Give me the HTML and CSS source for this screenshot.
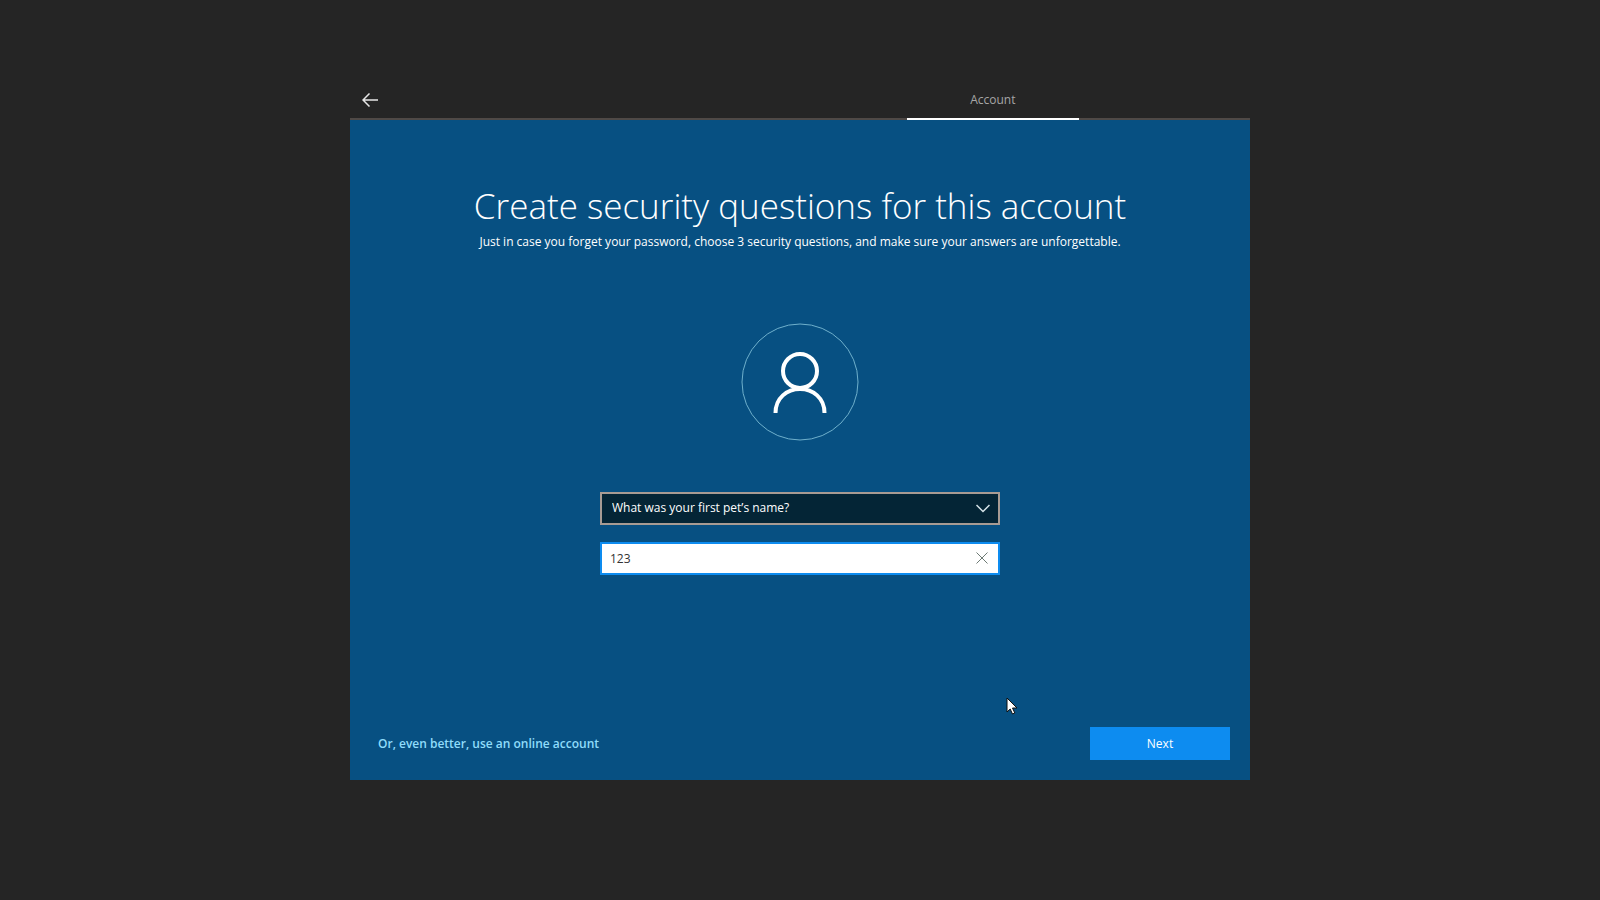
FILE: index.html
```html
<!DOCTYPE html>
<html lang="en">
<head>
    <meta charset="UTF-8">
    <meta name="viewport" content="width=device-width, initial-scale=1.0">
    <title>Account</title>
    <link rel="stylesheet" href="styles.css">
</head>
<body>

<div class="setup">
    <header class="top-bar">
        <button class="back-btn" type="button" aria-label="Back">
            <svg width="16" height="14" viewBox="0 0 16 14">
                <path d="M16 7H1M7.5 0.5L1 7l6.5 6.5" />
            </svg>
        </button>
        <div class="tab">Account</div>
    </header>

    <main class="panel">
        <h1>Create security questions for this account</h1>
        <p class="subtitle">Just in case you forget your password, choose 3 security questions, and make sure your answers are unforgettable.</p>

        <!-- User picture -->
        <svg class="avatar" width="118" height="118" viewBox="0 0 118 118">
            <circle class="ring" cx="59" cy="59" r="58" />
            <circle class="person" cx="59" cy="48" r="17" />
            <path class="person" d="M34.500 90C34.500 75 46 66 59 66S83.500 75 83.500 90" />
        </svg>

        <form class="questions" id="questions">
            <div class="field">
                <select class="question" aria-label="Security question">
                    <option>What was your first pet’s name?</option>
                </select>
                <svg class="chevron" width="14" height="9" viewBox="0 0 14 9">
                    <path d="M0.5 1L7 7.5L13.5 1" />
                </svg>
            </div>
            <div class="field">
                <input class="answer" type="text" value="123" aria-label="Your answer">
                <button class="clear-btn" type="button" aria-label="Clear">
                    <svg width="12" height="12" viewBox="0 0 12 12">
                        <path d="M0.5 0.5l11 11M11.5 0.5l-11 11" />
                    </svg>
                </button>
            </div>
        </form>

        <footer class="actions">
            <a class="online-link" href="#">Or, even better, use an online account</a>
            <button class="next-btn" type="submit" form="questions">Next</button>
        </footer>
    </main>
</div>

<!-- Mouse pointer -->
<svg class="pointer" width="12" height="19" viewBox="0 0 12 19">
    <path d="M1 1v14l3.200-3 2.300 5 2.300-1-2.300-5h4.500z" />
</svg>

</body>
</html>
```
FILE: styles.css
```css
* {
    box-sizing: border-box;
}
body {
    margin: 0;
    padding: 80px 20px;
    background-color: #252525;
    color: #fff;
    font-family: "Segoe UI", "Open Sans", "Noto Sans", sans-serif;
    font-size: 12px;
    line-height: 20px;
}
button, input, select {
    font: inherit;
}
.setup {
    max-width: 900px;
    margin: 0 auto;
}

/* Top bar with the back arrow and the tab */
.top-bar {
    display: grid;
    grid-template-columns: 13fr 4fr 4fr;
    height: 40px;
    background: linear-gradient(#4f4946, #4f4946) bottom / 100% 2px no-repeat;
}
.back-btn {
    justify-self: start;
    display: flex;
    align-items: center;
    width: 40px;
    padding: 0 12px;
    background: none;
    border: none;
}
.back-btn svg {
    fill: none;
    stroke: #e6e6e6;
    stroke-width: 1.5;
}
.tab {
    padding-top: 10px;
    text-align: center;
    color: #a6a6a6;
    border-bottom: 2px solid #fff;
}

.panel {
    display: flex;
    flex-direction: column;
    align-items: center;
    padding: 60px 20px 20px;
    background-color: #075082;
}
h1 {
    margin: 0;
    font-size: 35px;
    line-height: 52px;
    font-weight: 300;
    text-align: center;
}
.subtitle {
    margin: 0;
    text-align: center;
}
.avatar {
    margin-top: 71px;
    fill: none;
}
.ring {
    stroke: #6fb0cc;
}
.person {
    stroke: #fff;
    stroke-width: 4;
}

/* Question and answer */
.questions {
    display: grid;
    gap: 17px;
    width: 100%;
    max-width: 400px;
    margin-top: 51px;
}
.field {
    position: relative;
}
.question, .answer {
    display: block;
    width: 100%;
    height: 33px;
    border-radius: 0;
    outline: none;
}
.question {
    appearance: none;
    padding: 0 36px 1px 10px;
    background-color: #042536;
    border: 2px solid #a89b93;
    color: #fff;
}
.answer {
    padding: 0 36px 1px 8px;
    background-color: #fff;
    border: 2px solid #0d8cf0;
    color: #333;
}
.chevron {
    position: absolute;
    top: 12px;
    right: 10px;
    fill: none;
    stroke: #d5e3e8;
    stroke-width: 1.5;
    pointer-events: none;
}
.clear-btn {
    position: absolute;
    top: 2px;
    right: 2px;
    display: flex;
    align-items: center;
    justify-content: center;
    width: 32px;
    height: 27px;
    padding: 0;
    background: none;
    border: none;
}
.clear-btn svg {
    fill: none;
    stroke: #6d7a74;
}

.actions {
    display: flex;
    align-items: center;
    justify-content: space-between;
    width: 100%;
    margin-top: 152px;
    padding-left: 8px;
}
.online-link {
    color: #8fdcfb;
    font-weight: 600;
    text-decoration: none;
}
.next-btn {
    width: 140px;
    height: 33px;
    padding: 0;
    background-color: #0d8cf0;
    border: none;
    color: #fff;
}
.next-btn:hover {
    background-color: #2b9bf4;
}
.pointer {
    position: absolute;
    top: 697px;
    left: 1006px;
    fill: #fff;
    stroke: #111;
    pointer-events: none;
}
```
